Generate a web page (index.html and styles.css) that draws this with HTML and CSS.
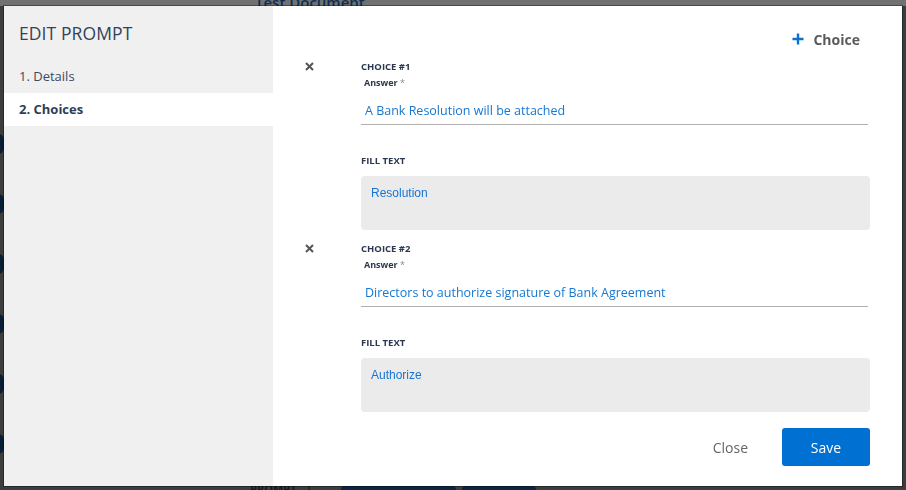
FILE: index.html
```html
<!DOCTYPE html>
<html lang="en">
<head>
    <meta charset="UTF-8">
    <meta name="viewport" content="width=device-width, initial-scale=1.0">
    <title>Edit Prompt</title>
    <link rel="stylesheet" href="styles.css">
</head>
<body>

<div class="page">
    <div class="page-title">Test Document</div>
    <div class="page-side">
        <span class="dot"></span><span class="dot"></span><span class="dot"></span>
        <span class="dot"></span><span class="dot"></span><span class="dot"></span>
    </div>
    <div class="page-bottom">
        <span class="page-label">PROMPT</span>
        <span class="page-sep">|</span>
        <span class="page-btn wide"></span>
        <span class="page-btn"></span>
    </div>
</div>

<div class="overlay">
    <div class="modal">
        <aside class="sidebar">
            <h1>EDIT PROMPT</h1>
            <div class="nav-item">1. Details</div>
            <div class="nav-item active">2. Choices</div>
        </aside>

        <main class="content">
            <div class="toolbar">
                <button type="button" class="add-btn">
                    <svg width="12" height="12" viewBox="0 0 12 12"><path d="M6 0.5v11M0.5 6h11" stroke="#0a70d2" stroke-width="2.4"/></svg>
                    Choice
                </button>
            </div>

            <div class="choice">
                <button type="button" class="remove" title="Remove">
                    <svg width="9" height="9" viewBox="0 0 9 9"><path d="M1 1l7 7M8 1l-7 7" stroke="#555" stroke-width="2"/></svg>
                </button>
                <div class="fields">
                    <div class="choice-title">CHOICE #1</div>
                    <label class="answer-label">Answer <span class="req">*</span></label>
                    <input type="text" class="answer" value="A Bank Resolution will be attached">
                    <div class="fill-label">FILL TEXT</div>
                    <textarea class="fill">Resolution</textarea>
                </div>
            </div>

            <div class="choice">
                <button type="button" class="remove" title="Remove">
                    <svg width="9" height="9" viewBox="0 0 9 9"><path d="M1 1l7 7M8 1l-7 7" stroke="#555" stroke-width="2"/></svg>
                </button>
                <div class="fields">
                    <div class="choice-title">CHOICE #2</div>
                    <label class="answer-label">Answer <span class="req">*</span></label>
                    <input type="text" class="answer" value="Directors to authorize signature of Bank Agreement">
                    <div class="fill-label">FILL TEXT</div>
                    <textarea class="fill">Authorize</textarea>
                </div>
            </div>

            <div class="actions">
                <button type="button" class="close-btn">Close</button>
                <button type="button" class="save-btn">Save</button>
            </div>
        </main>
    </div>
</div>

</body>
</html>
```

FILE: styles.css
```css
body {
    margin: 0;
    padding: 0;
    background-color: #3d3d3d;
    font-family: "Open Sans", Arial, sans-serif;
    overflow: hidden;
}

/* page behind the modal */
.page {
    height: 490px;
    display: flex;
    flex-direction: column;
}
.page-title {
    height: 6px;
    background-color: #717171;
    padding-left: 255px;
    font-size: 15px;
    font-weight: 600;
    line-height: 4px;
    color: #0d2d55;
    overflow: hidden;
}
.page-side {
    flex: 1;
    display: flex;
    flex-direction: column;
    gap: 40px;
    padding-top: 128px;
}
.dot {
    display: block;
    width: 6px;
    height: 20px;
    border-radius: 0 10px 10px 0;
    background-color: #0a1e33;
    margin-left: -2px;
}
.page-bottom {
    height: 14px;
    display: flex;
    align-items: flex-end;
    padding-left: 250px;
    font-size: 11px;
    line-height: 6px;
    color: #1a1a1a;
    font-weight: 700;
}
.page-label {
    width: 56px;
    height: 4px;
    overflow: hidden;
}
.page-sep {
    width: 35px;
    height: 4px;
    overflow: hidden;
}
.page-btn {
    width: 74px;
    height: 4px;
    background-color: #0b2442;
    border-radius: 8px 8px 0 0;
}
.page-btn.wide {
    width: 115px;
    margin-right: 6px;
}

/* modal */
.overlay {
    position: fixed;
    top: 6px;
    left: 4px;
    width: 898px;
    height: 480px;
}
.modal {
    display: flex;
    height: 100%;
    background: #ffffff;
    box-shadow: 0 0 0 1px rgba(0, 0, 0, 0.35);
}
.sidebar {
    width: 269px;
    flex-shrink: 0;
    background-color: #f0f0f0;
    color: #33425a;
}
.sidebar h1 {
    margin: 0;
    padding: 15px 15px 15px;
    font-size: 17.5px;
    font-weight: 400;
    line-height: 24px;
    letter-spacing: 0.1px;
}
.nav-item {
    height: 33px;
    line-height: 33px;
    padding-left: 15px;
    font-size: 13px;
    color: #3d4a5e;
}
.nav-item.active {
    background-color: #ffffff;
    font-weight: 700;
    color: #2f3d55;
}

.content {
    flex: 1;
    padding: 22px 32px 0 30px;
}
.toolbar {
    display: flex;
    justify-content: flex-end;
    height: 22px;
    margin-bottom: 10px;
}
.add-btn {
    display: flex;
    align-items: center;
    gap: 9px;
    border: none;
    background: none;
    padding: 0 10px 0 0;
    font-family: "Open Sans", Arial, sans-serif;
    font-size: 14px;
    font-weight: 700;
    color: #5b5b5b;
    cursor: pointer;
}

.choice {
    display: grid;
    grid-template-columns: 58px 1fr;
    margin-bottom: 12px;
}
.remove {
    border: none;
    background: none;
    padding: 2px 0 0 0;
    width: 12px;
    height: 12px;
    display: flex;
    justify-content: center;
    align-items: flex-start;
    cursor: pointer;
}
.choice-title {
    font-size: 9.5px;
    font-weight: 700;
    line-height: 14px;
    color: #2b384d;
}
.answer-label {
    display: block;
    margin-top: 3px;
    padding-left: 3px;
    font-size: 9px;
    font-weight: 700;
    line-height: 12px;
    color: #2b384d;
}
.req {
    color: #888;
    font-weight: 400;
}
.answer {
    display: block;
    box-sizing: border-box;
    width: calc(100% - 2px);
    height: 29px;
    margin-top: 7px;
    padding: 0 4px;
    border: none;
    border-bottom: 1px solid #b0b0b0;
    font-family: "Open Sans", Arial, sans-serif;
    font-size: 12.5px;
    color: #1677d2;
    outline: none;
}
.fill-label {
    margin-top: 29px;
    font-size: 9.5px;
    font-weight: 700;
    line-height: 14px;
    color: #2b384d;
}
.fill {
    display: block;
    box-sizing: border-box;
    width: 100%;
    height: 54px;
    margin-top: 8px;
    padding: 10px 10px;
    border: none;
    border-radius: 4px;
    background-color: #ebebeb;
    font-family: "Liberation Sans", Arial, sans-serif;
    font-size: 12px;
    line-height: 14px;
    color: #1874d2;
    resize: none;
    outline: none;
}

.actions {
    display: flex;
    justify-content: flex-end;
    align-items: center;
    gap: 34px;
    margin-top: 16px;
}
.close-btn {
    border: none;
    background: none;
    padding: 0;
    font-family: "Open Sans", Arial, sans-serif;
    font-size: 14px;
    color: #666;
    cursor: pointer;
}
.save-btn {
    width: 88px;
    height: 38px;
    border: none;
    border-radius: 3px;
    background-color: #0070d2;
    color: #ffffff;
    font-family: "Open Sans", Arial, sans-serif;
    font-size: 14px;
    cursor: pointer;
}
```
